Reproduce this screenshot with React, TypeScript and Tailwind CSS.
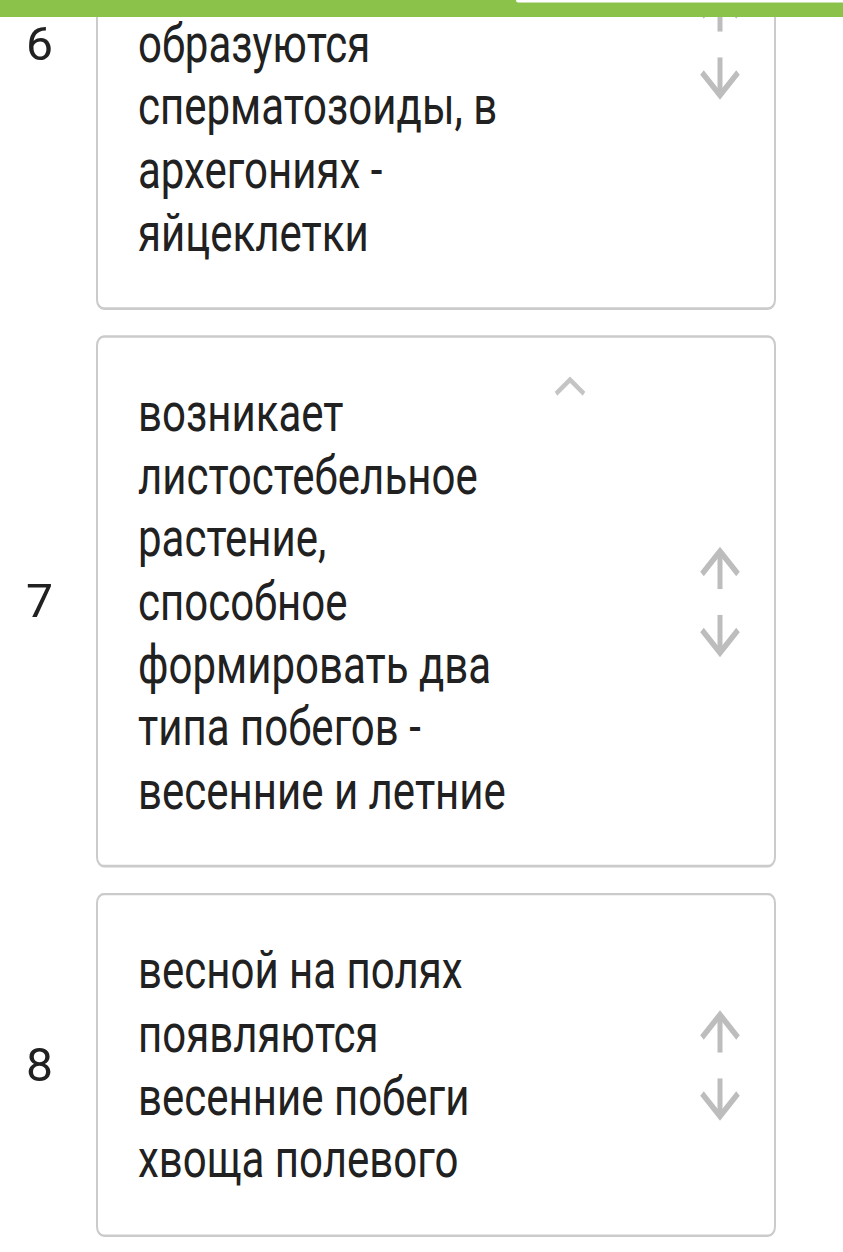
import React from "react";

interface StepCard {
    num: number;
    lines: string[];
    hint?: boolean;
    // lines scrolled out of view above the header
    hiddenLines?: number;
}

const steps: StepCard[] = [
    { num: 6, lines: ["образуются", "сперматозоиды, в", "архегониях -", "яйцеклетки"], hiddenLines: 3 },
    { num: 7, lines: ["возникает", "листостебельное", "растение,", "способное", "формировать два", "типа побегов -", "весенние и летние"], hint: true },
    { num: 8, lines: ["весной на полях", "появляются", "весенние побеги", "хвоща полевого"] },
];

const Arrow: React.FC<{ up?: boolean }> = ({ up }) => (
    <svg width="44" height="35" viewBox="0 0 44 35" fill="none" stroke="#bdbdbd" strokeWidth="5" className={up ? "" : "rotate-180"}>
        <path d="M22 5V35" />
        <path d="M4 23L22 5L40 23" />
    </svg>
);

const Card: React.FC<StepCard> = ({ num, lines, hint, hiddenLines }) => {
    return (
        <div className="flex items-center">
            <div className="w-[96px] pr-[18px] text-center text-[37px] leading-none text-[#212121]">
                <span className="inline-block scale-x-[1.3]">{num}</span>
            </div>
            <div className="relative mr-[67px] flex flex-1 items-center rounded-[8px] border-2 border-[#cbcbcb] bg-white py-[34px] pl-[40px] pr-[32px]">
                {hint && (
                    <svg width="34" height="16" viewBox="0 0 34 16" fill="none" stroke="#c4c4c4" strokeWidth="4" className="absolute left-[455px] top-[30px]">
                        <path d="M3 14L17 3L31 14" />
                    </svg>
                )}
                <div className="flex-1 text-[42px] leading-[49.6px] text-[#212121]">
                    {hiddenLines ? <div className="h-[148.8px]" /> : null}
                    {lines.map((l, i) => (
                        <p key={i} className="whitespace-nowrap">{l}</p>
                    ))}
                </div>
                <div className="flex flex-col items-center gap-[20px]">
                    <Arrow up />
                    <Arrow />
                </div>
            </div>
        </div>
    );
};

const App: React.FC = () => {
    return (
        <div className="h-[1252px] w-[843px] overflow-hidden bg-white font-[Roboto,sans-serif]">
            <div className="relative flex origin-top scale-y-[1.27] flex-col">
                <div className="absolute inset-x-0 top-0 z-10 h-[13.4px] bg-[#8bc34a]">
                    <div className="ml-[516px] h-[2.4px] rounded-bl-[3px] bg-white" />
                </div>
                <div className="-mt-[175px] flex flex-col gap-[20px]">
                    {steps.map((s) => (
                        <Card key={s.num} {...s} />
                    ))}
                </div>
            </div>
        </div>
    );
};

export default App;
